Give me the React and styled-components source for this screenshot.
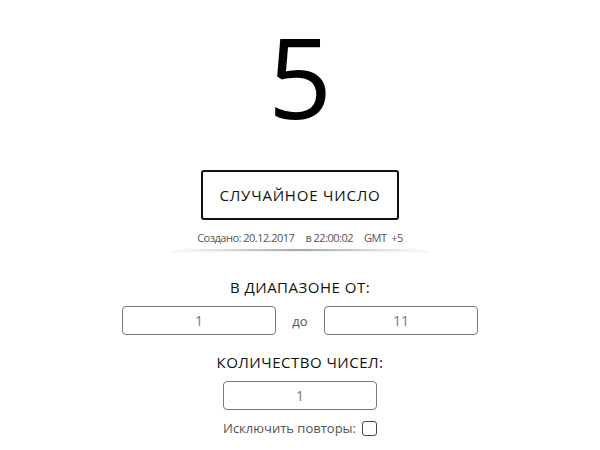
import styled, { createGlobalStyle } from "styled-components";

const GlobalStyle = createGlobalStyle`
    body {
        margin: 0;
        background: #fff;
        font-family: "Open Sans", "DejaVu Sans", sans-serif;
        color: #111;
    }
`

export default function App () {
    return (
        <Page>
            <GlobalStyle />
            <Result>5</Result>
            <GenerateButton>СЛУЧАЙНОЕ ЧИСЛО</GenerateButton>
            <Created>
                <span>Создано: 20.12.2017</span>
                <span>в 22:00:02</span>
                <span>GMT&nbsp;&nbsp;+5</span>
            </Created>
            <Divider />
            <Label>В ДИАПАЗОНЕ ОТ:</Label>
            <RangeRow>
                <NumberInput defaultValue="1" />
                <Between>до</Between>
                <NumberInput defaultValue="11" />
            </RangeRow>
            <Label $top={17}>КОЛИЧЕСТВО ЧИСЕЛ:</Label>
            <NumberInput defaultValue="1" />
            <CheckRow>
                Исключить повторы:
                <Check type="checkbox" />
            </CheckRow>
        </Page>
    )
}

const Page = styled.div`
    display: flex;
    flex-direction: column;
    align-items: center;
    width: 600px;
    height: 450px;
    overflow: hidden;
`

const Result = styled.div`
    font-size: 112px;
    line-height: 1.36;
    font-weight: 400;
    color: #000;
`

const GenerateButton = styled.button`
    margin-top: 18px;
    width: 198px;
    height: 50px;
    border: 2px solid #111;
    border-radius: 3px;
    background: #fff;
    font-family: "Open Sans", sans-serif;
    font-size: 15px;
    font-weight: 500;
    letter-spacing: 0.8px;
    color: #111;
    padding: 0;
`

const Created = styled.div`
    display: flex;
    gap: 11px;
    margin-top: 10px;
    font-size: 11px;
    color: #555;
    letter-spacing: -0.5px;
`

const Divider = styled.div`
    margin-top: 4px;
    width: 256px;
    height: 2px;
    background: linear-gradient(to right, rgba(0,0,0,0), rgba(0,0,0,0.35) 50%, rgba(0,0,0,0));
    box-shadow: 0 1px 2px rgba(0,0,0,0.08);
`

const Label = styled.div`
    margin-top: ${props => props.$top || 26}px;
    margin-bottom: 9px;
    font-size: 15px;
    letter-spacing: 0.5px;
    color: #111;
`

const RangeRow = styled.div`
    display: flex;
    align-items: center;
`

const Between = styled.span`
    width: 48px;
    text-align: center;
    font-size: 13px;
    color: #555;
`

const NumberInput = styled.input`
    box-sizing: border-box;
    width: 154px;
    height: 29px;
    border: 1px solid #777;
    border-radius: 4px;
    text-align: center;
    font-family: "Open Sans", sans-serif;
    font-size: 14px;
    color: #777;
    outline: none;
`

const CheckRow = styled.label`
    display: flex;
    align-items: center;
    gap: 6px;
    margin-top: 9px;
    font-size: 13px;
    color: #555;
`

const Check = styled.input`
    appearance: none;
    margin: 0;
    width: 15px;
    height: 15px;
    border: 1px solid #444;
    border-radius: 3px;
    background: #fff;
`
